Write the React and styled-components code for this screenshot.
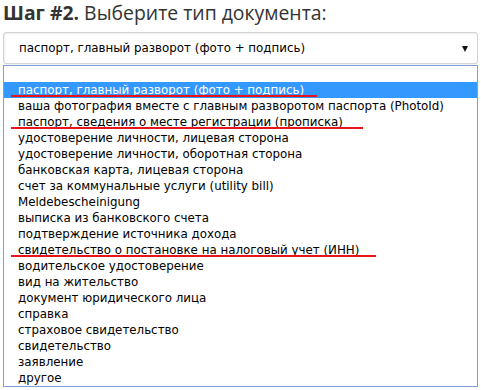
import React from 'react'
import styled, {createGlobalStyle} from 'styled-components'

const options = [
  {label: 'паспорт, главный разворот (фото + подпись)', mark: 306},
  {label: 'ваша фотография вместе с главным разворотом паспорта (PhotoId)'},
  {label: 'паспорт, сведения о месте регистрации (прописка)', mark: 352},
  {label: 'удостоверение личности, лицевая сторона'},
  {label: 'удостоверение личности, оборотная сторона'},
  {label: 'банковская карта, лицевая сторона'},
  {label: 'счет за коммунальные услуги (utility bill)'},
  {label: 'Meldebescheinigung'},
  {label: 'выписка из банковского счета'},
  {label: 'подтверждение источника дохода'},
  {label: 'свидетельство о постановке на налоговый учет (ИНН)', mark: 365},
  {label: 'водительское удостоверение'},
  {label: 'вид на жительство'},
  {label: 'документ юридического лица'},
  {label: 'справка'},
  {label: 'страховое свидетельство'},
  {label: 'свидетельство'},
  {label: 'заявление'},
  {label: 'другое'},
]

const GlobalStyle = createGlobalStyle`
  html, body {
    margin: 0;
    padding: 0;
    background: #fff;
  }
`

const Page = styled.div`
  width: 481px;
  padding: 0 3px;
  box-sizing: border-box;
`
const Heading = styled.h2`
  margin: 0;
  height: 32px;
  box-sizing: border-box;
  padding-top: 2px;
  font-family: 'Open Sans', sans-serif;
  font-size: 19.4px;
  font-weight: normal;
  line-height: 22px;
  color: #333;
`
const Step = styled.b`
  font-weight: bold;
`
const Select = styled.div`
  display: flex;
  align-items: center;
  justify-content: space-between;
  height: 32px;
  box-sizing: border-box;
  padding: 0 9px 0 15px;
  border: 1px solid #d4d4d4;
  border-radius: 3px;
  box-shadow: inset 1px 1px 2px rgba(0, 0, 0, 0.08), 0 1px 1px rgba(0, 0, 0, 0.06);
  background: #fff;
`
const Value = styled.span`
  font-family: 'DejaVu Sans', Verdana, sans-serif;
  font-size: 11.85px;
  color: #000;
`
// dropdown caret
const Arrow = styled.span`
  width: 0;
  height: 0;
  border-left: 3.5px solid transparent;
  border-right: 3.5px solid transparent;
  border-top: 6px solid #111;
  margin-top: 1px;
`
const List = styled.div`
  margin-top: 1px;
  border: 1px solid #7f9fd6;
  background: #fff;
`
const Option = styled.div`
  position: relative;
  height: 16px;
  line-height: 16px;
  padding-left: 14px;
  white-space: nowrap;
  font-family: 'DejaVu Sans', Verdana, sans-serif;
  font-size: 11.85px;
  color: ${p => (p.$active ? '#fff' : '#000')};
  background: ${p => (p.$active ? '#3399ff' : 'transparent')};
`
// red annotation underline drawn over the option
const Mark = styled.span`
  position: absolute;
  left: 7px;
  top: 12.5px;
  width: ${p => p.$width}px;
  height: 2px;
  background: #e8141c;
`

const App = () => {
  const selected = 0
  return (
    <Page>
      <GlobalStyle />
      <Heading>
        <Step>Шаг #2.</Step> Выберите тип документа:
      </Heading>
      <Select>
        <Value>{options[selected].label}</Value>
        <Arrow />
      </Select>
      <List>
        <Option />
        {options.map((o, i) => (
          <Option key={o.label} $active={i === selected}>
            {o.label}
            {o.mark && <Mark $width={o.mark} />}
          </Option>
        ))}
      </List>
    </Page>
  )
}

export default App
